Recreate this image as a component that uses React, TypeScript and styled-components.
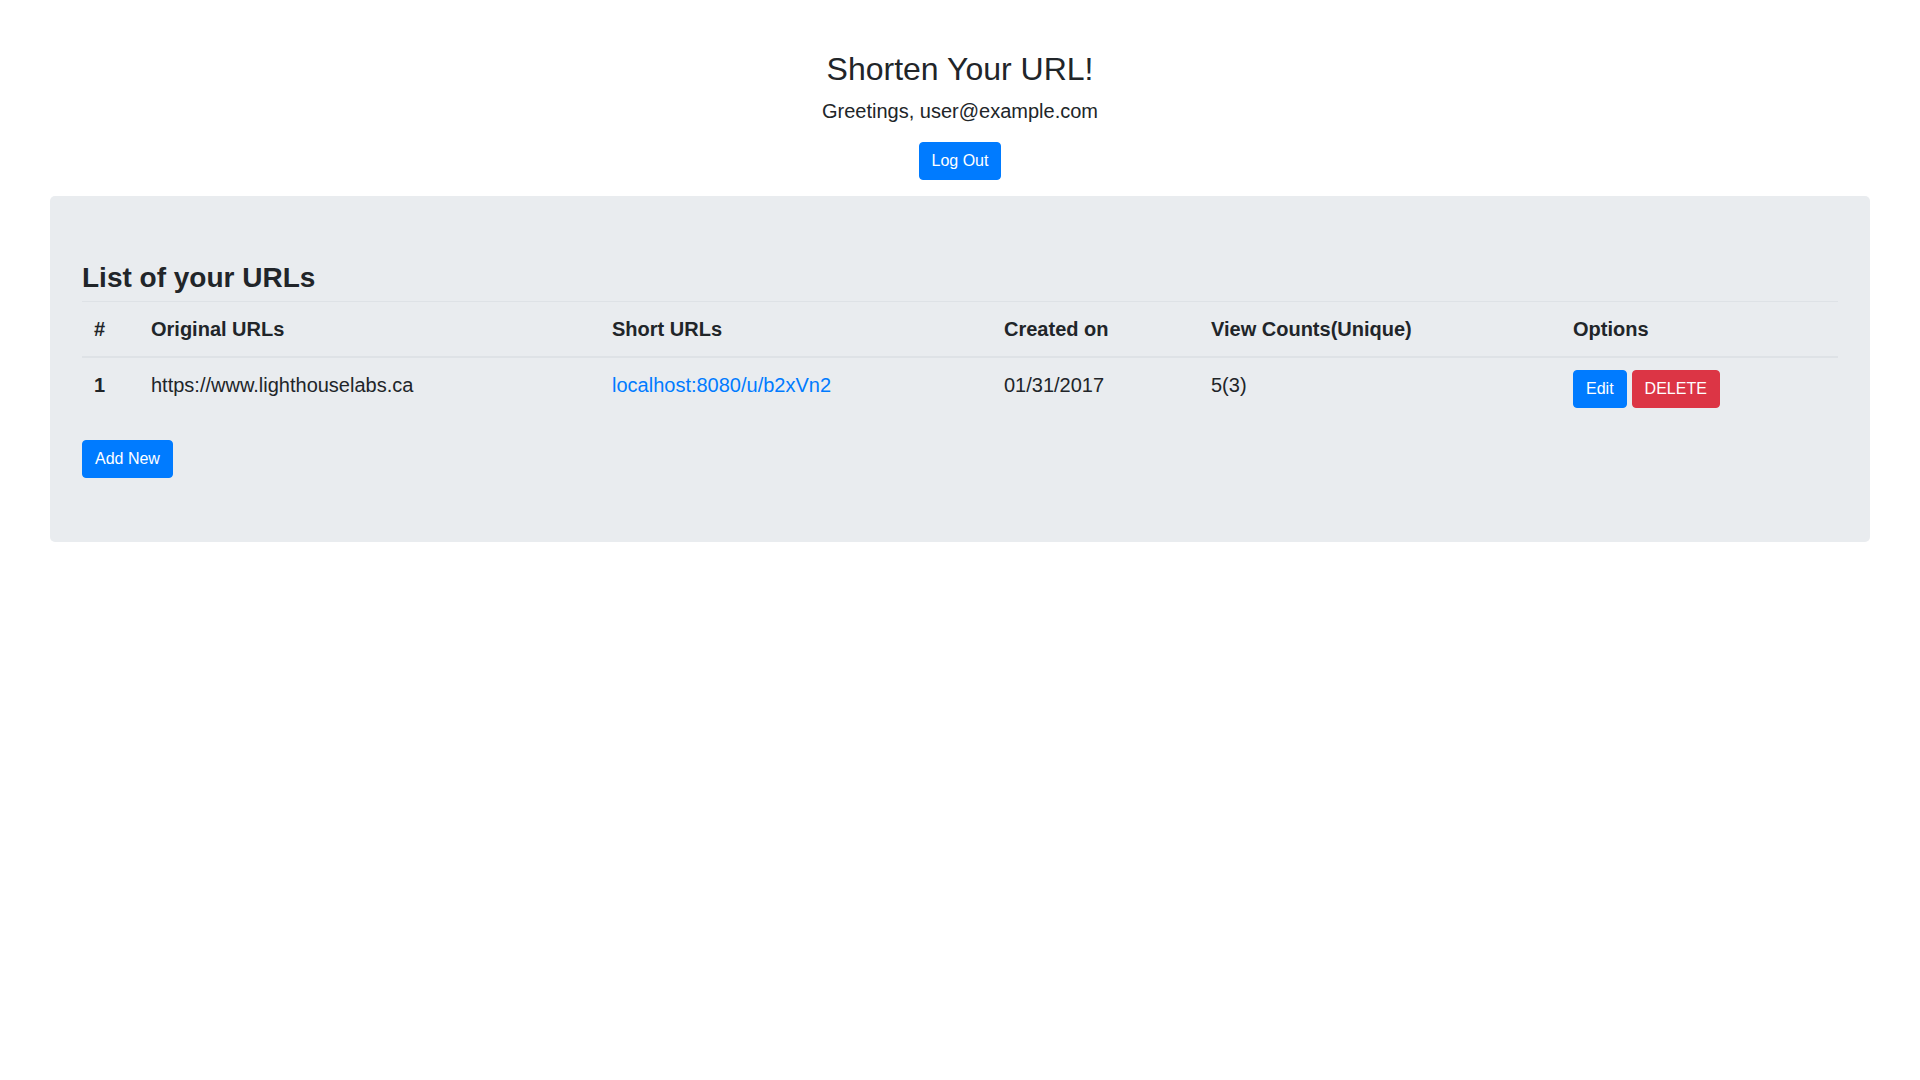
import React from 'react';
import styled, { createGlobalStyle, css } from 'styled-components';

const GlobalStyle = createGlobalStyle`
  *, *::before, *::after { box-sizing: border-box; }
  html, body { margin: 0; padding: 0; background: #ffffff; }
  body {
    font-family: "Liberation Sans", Arial, Helvetica, sans-serif;
    color: #212529;
    font-size: 20px;
    line-height: 1.5;
  }
`;

const Page = styled.main`
  padding: 50px 50px 0;
`;

const Header = styled.header`
  display: flex;
  flex-direction: column;
  align-items: center;
`;

const Title = styled.h1`
  margin: 0 0 8px;
  font-size: 32px;
  font-weight: 400;
  line-height: 1.2;
`;

const Greeting = styled.p`
  margin: 0 0 16px;
  font-size: 20px;
  line-height: 1.5;
`;

type Variant = 'primary' | 'danger';

const Button = styled.button<{ $variant?: Variant }>`
  display: inline-block;
  font-family: inherit;
  font-size: 16px;
  line-height: 24px;
  font-weight: 400;
  padding: 6px 12px;
  border-radius: 4px;
  color: #ffffff;
  cursor: pointer;
  ${({ $variant = 'primary' }) =>
    $variant === 'danger'
      ? css`
          background: #dc3545;
          border: 1px solid #dc3545;
        `
      : css`
          background: #007bff;
          border: 1px solid #007bff;
        `}
`;

const Jumbotron = styled.section`
  margin-top: 16px;
  background: #e9ecef;
  border-radius: 5px;
  padding: 65px 32px 64px;
`;

const SectionTitle = styled.h3`
  margin: 0 0 6px;
  font-size: 28px;
  font-weight: 700;
  line-height: 1.2;
`;

const Table = styled.table`
  width: 100%;
  table-layout: fixed;
  border-collapse: collapse;
  margin-bottom: 20px;
  color: #212529;
`;

const Col = styled.col<{ $width: number }>`
  width: ${({ $width }) => $width}px;
`;

const HeadCell = styled.th`
  padding: 12px;
  text-align: left;
  vertical-align: bottom;
  font-weight: 700;
  border-top: 1px solid #dee2e6;
  border-bottom: 2px solid #dee2e6;
`;

const RowHead = styled.th`
  padding: 12px;
  text-align: left;
  vertical-align: top;
  font-weight: 700;
  border-top: 1px solid #dee2e6;
`;

const Cell = styled.td`
  padding: 12px;
  vertical-align: top;
  border-top: 1px solid #dee2e6;
`;

const Link = styled.a`
  color: #007bff;
  text-decoration: none;
`;

const Actions = styled.div`
  display: flex;
  gap: 5px;
`;

const columns = [
  { label: '#', width: 57 },
  { label: 'Original URLs', width: 461 },
  { label: 'Short URLs', width: 392 },
  { label: 'Created on', width: 207 },
  { label: 'View Counts(Unique)', width: 362 },
  { label: 'Options', width: 277 },
];

const rows = [
  {
    id: 1,
    original: 'https://www.lighthouselabs.ca',
    short: 'localhost:8080/u/b2xVn2',
    created: '01/31/2017',
    views: '5(3)',
  },
];

export default function App() {
  return (
    <>
      <GlobalStyle />
      <Page>
        <Header>
          <Title>Shorten Your URL!</Title>
          <Greeting>Greetings, user@example.com</Greeting>
          <Button $variant="primary">Log Out</Button>
        </Header>
        <Jumbotron>
          <SectionTitle>List of your URLs</SectionTitle>
          <Table>
            <colgroup>
              {columns.map((c) => (
                <Col key={c.label} $width={c.width} />
              ))}
            </colgroup>
            <thead>
              <tr>
                {columns.map((c) => (
                  <HeadCell key={c.label}>{c.label}</HeadCell>
                ))}
              </tr>
            </thead>
            <tbody>
              {rows.map((r) => (
                <tr key={r.id}>
                  <RowHead scope="row">{r.id}</RowHead>
                  <Cell>{r.original}</Cell>
                  <Cell>
                    <Link href="#">{r.short}</Link>
                  </Cell>
                  <Cell>{r.created}</Cell>
                  <Cell>{r.views}</Cell>
                  <Cell>
                    <Actions>
                      <Button $variant="primary">Edit</Button>
                      <Button $variant="danger">DELETE</Button>
                    </Actions>
                  </Cell>
                </tr>
              ))}
            </tbody>
          </Table>
          <Button $variant="primary">Add New</Button>
        </Jumbotron>
      </Page>
    </>
  );
}
